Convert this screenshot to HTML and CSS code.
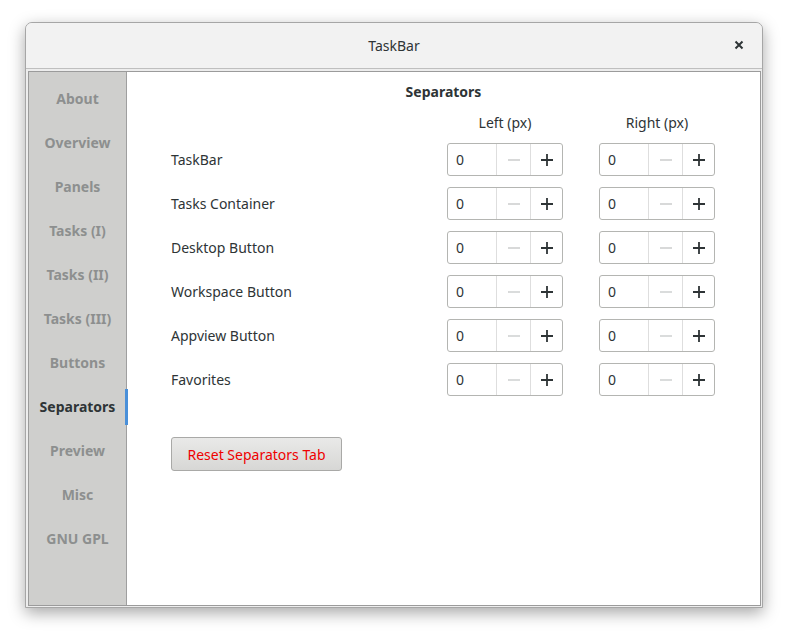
FILE: index.html
```html
<!DOCTYPE html>
<html>
<head>
<meta charset="utf-8">
<link rel="stylesheet" href="styles.css">
</head>
<body>
<div class="window">
  <div class="titlebar">
    <span class="title">TaskBar</span>
    <span class="close"><svg width="10" height="10" viewBox="0 0 10 10"><path d="M1.5 1.5 L8.5 8.5 M8.5 1.5 L1.5 8.5" stroke="#2e3436" stroke-width="2" stroke-linecap="butt"/></svg></span>
  </div>
  <div class="body">
    <div class="frame">
      <div class="sidebar">
        <div class="tab">About</div>
        <div class="tab">Overview</div>
        <div class="tab">Panels</div>
        <div class="tab">Tasks (I)</div>
        <div class="tab">Tasks (II)</div>
        <div class="tab">Tasks (III)</div>
        <div class="tab">Buttons</div>
        <div class="tab active">Separators</div>
        <div class="tab">Preview</div>
        <div class="tab">Misc</div>
        <div class="tab">GNU GPL</div>
      </div>
      <div class="content">
        <div class="heading">Separators</div>
        <div class="grid">
          <div></div>
          <div class="colhead">Left (px)</div>
          <div class="colhead">Right (px)</div>

          <div class="label">TaskBar</div>
          <div class="spin"><span class="val">0</span><span class="btn minus"><svg width="12" height="12" viewBox="0 0 12 12"><path d="M0 6H12" stroke="#cbcdcd" stroke-width="1.4"/></svg></span><span class="btn plus"><svg width="12" height="12" viewBox="0 0 12 12"><path d="M0 6H12M6 0V12" stroke="#2e3436" stroke-width="1.8"/></svg></span></div>
          <div class="spin"><span class="val">0</span><span class="btn minus"><svg width="12" height="12" viewBox="0 0 12 12"><path d="M0 6H12" stroke="#cbcdcd" stroke-width="1.4"/></svg></span><span class="btn plus"><svg width="12" height="12" viewBox="0 0 12 12"><path d="M0 6H12M6 0V12" stroke="#2e3436" stroke-width="1.8"/></svg></span></div>

          <div class="label">Tasks Container</div>
          <div class="spin"><span class="val">0</span><span class="btn minus"><svg width="12" height="12" viewBox="0 0 12 12"><path d="M0 6H12" stroke="#cbcdcd" stroke-width="1.4"/></svg></span><span class="btn plus"><svg width="12" height="12" viewBox="0 0 12 12"><path d="M0 6H12M6 0V12" stroke="#2e3436" stroke-width="1.8"/></svg></span></div>
          <div class="spin"><span class="val">0</span><span class="btn minus"><svg width="12" height="12" viewBox="0 0 12 12"><path d="M0 6H12" stroke="#cbcdcd" stroke-width="1.4"/></svg></span><span class="btn plus"><svg width="12" height="12" viewBox="0 0 12 12"><path d="M0 6H12M6 0V12" stroke="#2e3436" stroke-width="1.8"/></svg></span></div>

          <div class="label">Desktop Button</div>
          <div class="spin"><span class="val">0</span><span class="btn minus"><svg width="12" height="12" viewBox="0 0 12 12"><path d="M0 6H12" stroke="#cbcdcd" stroke-width="1.4"/></svg></span><span class="btn plus"><svg width="12" height="12" viewBox="0 0 12 12"><path d="M0 6H12M6 0V12" stroke="#2e3436" stroke-width="1.8"/></svg></span></div>
          <div class="spin"><span class="val">0</span><span class="btn minus"><svg width="12" height="12" viewBox="0 0 12 12"><path d="M0 6H12" stroke="#cbcdcd" stroke-width="1.4"/></svg></span><span class="btn plus"><svg width="12" height="12" viewBox="0 0 12 12"><path d="M0 6H12M6 0V12" stroke="#2e3436" stroke-width="1.8"/></svg></span></div>

          <div class="label">Workspace Button</div>
          <div class="spin"><span class="val">0</span><span class="btn minus"><svg width="12" height="12" viewBox="0 0 12 12"><path d="M0 6H12" stroke="#cbcdcd" stroke-width="1.4"/></svg></span><span class="btn plus"><svg width="12" height="12" viewBox="0 0 12 12"><path d="M0 6H12M6 0V12" stroke="#2e3436" stroke-width="1.8"/></svg></span></div>
          <div class="spin"><span class="val">0</span><span class="btn minus"><svg width="12" height="12" viewBox="0 0 12 12"><path d="M0 6H12" stroke="#cbcdcd" stroke-width="1.4"/></svg></span><span class="btn plus"><svg width="12" height="12" viewBox="0 0 12 12"><path d="M0 6H12M6 0V12" stroke="#2e3436" stroke-width="1.8"/></svg></span></div>

          <div class="label">Appview Button</div>
          <div class="spin"><span class="val">0</span><span class="btn minus"><svg width="12" height="12" viewBox="0 0 12 12"><path d="M0 6H12" stroke="#cbcdcd" stroke-width="1.4"/></svg></span><span class="btn plus"><svg width="12" height="12" viewBox="0 0 12 12"><path d="M0 6H12M6 0V12" stroke="#2e3436" stroke-width="1.8"/></svg></span></div>
          <div class="spin"><span class="val">0</span><span class="btn minus"><svg width="12" height="12" viewBox="0 0 12 12"><path d="M0 6H12" stroke="#cbcdcd" stroke-width="1.4"/></svg></span><span class="btn plus"><svg width="12" height="12" viewBox="0 0 12 12"><path d="M0 6H12M6 0V12" stroke="#2e3436" stroke-width="1.8"/></svg></span></div>

          <div class="label">Favorites</div>
          <div class="spin"><span class="val">0</span><span class="btn minus"><svg width="12" height="12" viewBox="0 0 12 12"><path d="M0 6H12" stroke="#cbcdcd" stroke-width="1.4"/></svg></span><span class="btn plus"><svg width="12" height="12" viewBox="0 0 12 12"><path d="M0 6H12M6 0V12" stroke="#2e3436" stroke-width="1.8"/></svg></span></div>
          <div class="spin"><span class="val">0</span><span class="btn minus"><svg width="12" height="12" viewBox="0 0 12 12"><path d="M0 6H12" stroke="#cbcdcd" stroke-width="1.4"/></svg></span><span class="btn plus"><svg width="12" height="12" viewBox="0 0 12 12"><path d="M0 6H12M6 0V12" stroke="#2e3436" stroke-width="1.8"/></svg></span></div>
        </div>
        <div class="reset">Reset Separators Tab</div>
      </div>
    </div>
  </div>
</div>
</body>
</html>
```
FILE: styles.css
```css
html, body {
  margin: 0;
  padding: 0;
  background: #ffffff;
}
body {
  font-family: "Noto Sans", "DejaVu Sans", sans-serif;
  font-size: 14px;
  color: #2e3436;
  padding: 22px 0 30px 25px;
}
.window {
  width: 738px;
  height: 586px;
  box-sizing: border-box;
  border: 1px solid #a6a6a6;
  border-radius: 7px 7px 0 0;
  background: #ededed;
  box-shadow: 0 5px 16px rgba(0,0,0,0.35);
  display: flex;
  flex-direction: column;
  overflow: hidden;
}
.titlebar {
  height: 46px;
  flex: none;
  box-sizing: border-box;
  background: #f2f2f2;
  border-bottom: 1px solid #bfbfbf;
  display: flex;
  align-items: center;
  justify-content: center;
  position: relative;
}
.title {
  font-size: 14px;
  color: #2e3436;
}
.close {
  position: absolute;
  right: 18px;
  top: 17px;
  width: 10px;
  height: 10px;
  display: flex;
}
.body {
  flex: 1;
  padding: 2px 1px 1px 2px;
  display: flex;
}
.frame {
  flex: 1;
  border: 1px solid #9b9b9b;
  display: flex;
  background: #fff;
}
.sidebar {
  width: 97px;
  flex: none;
  background: #cfcfcd;
  border-right: 1px solid #9f9f9f;
  padding-top: 4px;
  display: flex;
  flex-direction: column;
}
.tab {
  height: 44px;
  display: flex;
  align-items: center;
  justify-content: center;
  font-weight: bold;
  font-size: 14px;
  color: #8d8f8f;
  position: relative;
}
.tab.active {
  color: #2e3436;
}
.tab.active::after {
  content: "";
  position: absolute;
  right: -2px;
  top: 5px;
  bottom: 3px;
  width: 3px;
  background: #4a90d9;
}
.content {
  flex: 1;
  padding-top: 10px;
}
.heading {
  text-align: center;
  font-weight: bold;
  line-height: 20px;
  height: 20px;
}
.grid {
  display: grid;
  grid-template-columns: 240px 116px 116px;
  column-gap: 36px;
  row-gap: 11px;
  padding-left: 44px;
  margin-top: 11px;
}
.colhead {
  text-align: center;
  line-height: 20px;
  margin-bottom: -1px;
}
.label {
  display: flex;
  align-items: center;
  height: 33px;
}
.spin {
  height: 33px;
  box-sizing: border-box;
  border: 1px solid #b4b5b2;
  border-radius: 3px;
  display: flex;
  background: #fff;
}
.val {
  width: 49px;
  padding-left: 8px;
  box-sizing: border-box;
  display: flex;
  align-items: center;
  border-right: 1px solid #dedede;
}
.btn {
  width: 33px;
  display: flex;
  align-items: center;
  justify-content: center;
}
.minus {
  border-right: 1px solid #dedede;
}
.plus {
  flex: 1;
}
.reset {
  margin-left: 44px;
  margin-top: 41px;
  width: 171px;
  height: 34px;
  box-sizing: border-box;
  border: 1px solid #a9a9a7;
  border-radius: 3px;
  background: linear-gradient(#e9e9e8, #d7d7d5);
  color: #ef0000;
  display: flex;
  align-items: center;
  justify-content: center;
}
```
